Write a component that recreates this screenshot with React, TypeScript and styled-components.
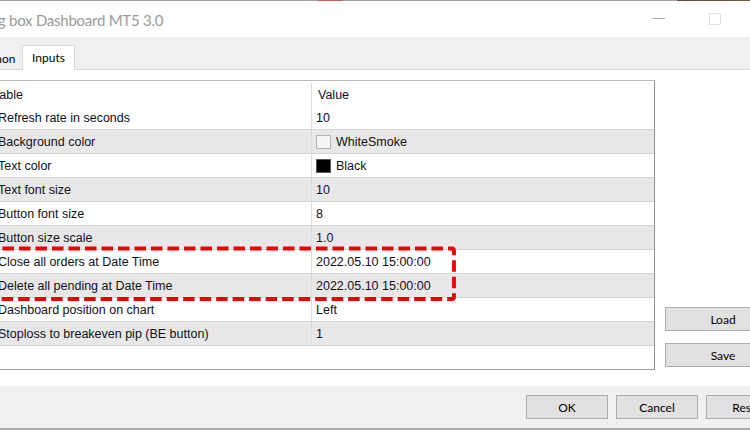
import React from "react";
import styled, { createGlobalStyle } from "styled-components";

const GlobalStyle = createGlobalStyle`
  html, body { margin: 0; padding: 0; background: #ffffff; }
  body { width: 750px; height: 430px; overflow: hidden; }
  #root { width: 750px; height: 430px; overflow: hidden; }
`;

const Window = styled.div`
  width: 869px;
  height: 430px;
  margin-left: -70px;
  display: flex;
  flex-direction: column;
  background: #ffffff;
  font-family: Lato, "Open Sans", sans-serif;
`;

const TopEdge = styled.div`
  flex: none;
  height: 1px;
  background: linear-gradient(
    to right,
    #a5a5a5 0 388px,
    #c06060 388px 413px,
    #a5a5a5 413px 747px,
    #5b4c3f 747px,
    #7a6a58 100%
  );
`;

const TitleBar = styled.div`
  flex: none;
  height: 36px;
  display: flex;
  align-items: center;
  background: #ffffff;
`;

const Title = styled.div`
  flex: 1;
  margin-left: 29px;
  margin-top: 2px;
  font-size: 15px;
  letter-spacing: -0.25px;
  color: #9a9a9a;
  white-space: nowrap;
`;

const Controls = styled.div`
  display: flex;
  height: 100%;
`;

const CtrlButton = styled.div`
  width: 56px;
  height: 100%;
  display: flex;
  align-items: center;
  justify-content: center;
`;

const MinGlyph = styled.div`
  width: 12px;
  height: 1px;
  margin-top: -2px;
  background: #a8a8a8;
`;

const MaxGlyph = styled.div`
  width: 10px;
  height: 10px;
  margin-top: -1px;
  border: 1px solid #e0e0e0;
`;

const TabStrip = styled.div`
  flex: none;
  height: 32px;
  display: flex;
  align-items: flex-end;
  padding-left: 31px;
  background: #f0f0f0;
  border-bottom: 1px solid #d9d9d9;
`;

const Tab = styled.div<{ $w: number; $active?: boolean }>`
  box-sizing: border-box;
  width: ${(p) => p.$w}px;
  height: ${(p) => (p.$active ? 25 : 22)}px;
  margin-bottom: ${(p) => (p.$active ? -1 : 0)}px;
  display: flex;
  align-items: center;
  justify-content: center;
  font-size: 12px;
  color: #000000;
  background: ${(p) => (p.$active ? "#ffffff" : "#f0f0f0")};
  border: 1px solid ${(p) => (p.$active ? "#d9d9d9" : "transparent")};
  border-bottom: none;
  padding-bottom: ${(p) => (p.$active ? 2 : 0)}px;
`;

const Content = styled.div`
  flex: 1;
  display: flex;
  padding: 10px 18px 16px 10px;
  background: #ffffff;
`;

const Grid = styled.div`
  box-sizing: border-box;
  width: 715px;
  height: 290px;
  display: flex;
  flex-direction: column;
  border: 1px solid;
  border-color: #b9b9b9 #8f8f8f #a0a0a0 #a0a0a0;
  background: #ffffff;
  font-family: "Liberation Sans", Arial, sans-serif;
  font-size: 12.5px;
  color: #101018;
`;

const HeaderRow = styled.div`
  flex: none;
  height: 25px;
  display: grid;
  grid-template-columns: 371px 1fr;
  padding-top: 2px;
  box-sizing: border-box;
`;

const Row = styled.div<{ $shade?: boolean }>`
  box-sizing: border-box;
  flex: none;
  height: 24px;
  display: grid;
  grid-template-columns: 371px 1fr;
  background: ${(p) => (p.$shade ? "#e8e8e8" : "#ffffff")};
  border-bottom: 1px solid #d5d5d5;
`;

const NameCell = styled.div<{ $indent: number }>`
  display: flex;
  align-items: center;
  padding-left: ${(p) => p.$indent}px;
  padding-top: 1px;
  border-right: 1px solid #dcdcdc;
  white-space: nowrap;
  overflow: hidden;
`;

const ValueCell = styled.div<{ $indent: number }>`
  display: flex;
  align-items: center;
  gap: 5px;
  padding-left: ${(p) => p.$indent}px;
  padding-top: 1px;
  white-space: nowrap;
`;

const Swatch = styled.span<{ $color: string; $edge: string }>`
  box-sizing: border-box;
  width: 15px;
  height: 14px;
  margin-top: -1px;
  background: ${(p) => p.$color};
  border: 1px solid ${(p) => p.$edge};
`;

const HighlightGroup = styled.div`
  position: relative;
  display: flex;
  flex-direction: column;
`;

const Marker = styled.svg`
  position: absolute;
  left: 29px;
  top: -4px;
  width: 488px;
  height: 57px;
  pointer-events: none;
  overflow: visible;
`;

const SidePanel = styled.div`
  width: 116px;
  margin-left: 10px;
  display: flex;
  flex-direction: column;
  justify-content: flex-end;
  gap: 12px;
  padding-bottom: 3px;
`;

const Button = styled.div<{ $w: number }>`
  box-sizing: border-box;
  width: ${(p) => p.$w}px;
  height: 24px;
  display: flex;
  align-items: center;
  justify-content: center;
  background: #e1e1e1;
  border: 1px solid #adadad;
  font-size: 12px;
  color: #000000;
`;

const Footer = styled.div`
  flex: none;
  height: 42px;
  display: flex;
  align-items: center;
  justify-content: flex-end;
  gap: 8px;
  padding-right: 11px;
  background: #f0f0f0;
  border-bottom: 2px solid #a7a7a7;
`;

type Item = { name: string; value: string; swatch?: [string, string] };

const before: Item[] = [
  { name: "Refresh rate in seconds", value: "10" },
  { name: "Background color", value: "WhiteSmoke", swatch: ["#f5f5f5", "#b4b4b4"] },
  { name: "Text color", value: "Black", swatch: ["#000000", "#5a5a5a"] },
  { name: "Text font size", value: "10" },
  { name: "Button font size", value: "8" },
  { name: "Button size scale", value: "1.0" },
];

const marked: Item[] = [
  { name: "Close all orders at Date Time", value: "2022.05.10 15:00:00" },
  { name: "Delete all pending at Date Time", value: "2022.05.10 15:00:00" },
];

const after: Item[] = [
  { name: "Dashboard position on chart", value: "Left" },
  { name: "Stoploss to breakeven pip (BE button)", value: "1" },
];

const renderRow = (item: Item, index: number) => (
  <Row key={item.name} $shade={index % 2 === 1}>
    <NameCell $indent={57}>{item.name}</NameCell>
    <ValueCell $indent={4}>
      {item.swatch && <Swatch $color={item.swatch[0]} $edge={item.swatch[1]} />}
      {item.value}
    </ValueCell>
  </Row>
);

export default function App() {
  return (
    <>
      <GlobalStyle />
      <Window>
        <TopEdge />
        <TitleBar>
          <Title>Trading box Dashboard MT5 3.0</Title>
          <Controls>
            <CtrlButton>
              <MinGlyph />
            </CtrlButton>
            <CtrlButton>
              <MaxGlyph />
            </CtrlButton>
            <CtrlButton />
          </Controls>
        </TitleBar>
        <TabStrip>
          <Tab $w={61}>Common</Tab>
          <Tab $w={53} $active>
            Inputs
          </Tab>
        </TabStrip>
        <Content>
          <Grid>
            <HeaderRow>
              <NameCell $indent={37}>Variable</NameCell>
              <ValueCell $indent={6}>Value</ValueCell>
            </HeaderRow>
            {before.map((item, i) => renderRow(item, i))}
            <HighlightGroup>
              {marked.map((item, i) => renderRow(item, i + before.length))}
              <Marker viewBox="0 0 488 57">
                <rect
                  x={10}
                  y={2.5}
                  width={474}
                  height={50.5}
                  rx={2}
                  fill="none"
                  stroke="#ee0000"
                  strokeWidth={3.8}
                  strokeDasharray="11.5 5"
                  strokeDashoffset={12.5}
                />
              </Marker>
            </HighlightGroup>
            {after.map((item, i) => renderRow(item, i + before.length + marked.length))}
          </Grid>
          <SidePanel>
            <Button $w={116}>Load</Button>
            <Button $w={116}>Save</Button>
          </SidePanel>
        </Content>
        <Footer>
          <Button $w={82}>OK</Button>
          <Button $w={82}>Cancel</Button>
          <Button $w={82}>Reset</Button>
        </Footer>
      </Window>
    </>
  );
}
